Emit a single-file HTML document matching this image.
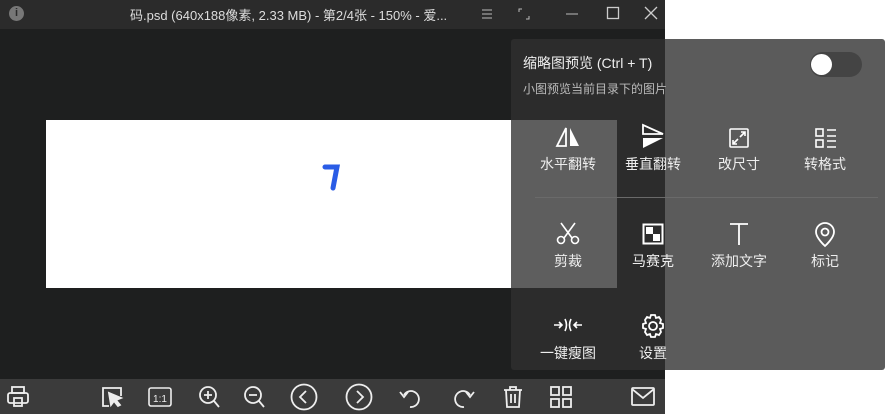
<!DOCTYPE html><html><head><meta charset="utf-8"><style>
*{margin:0;padding:0;box-sizing:border-box}
body{width:888px;height:417px;background:#fff;position:relative;overflow:hidden;font-family:"Liberation Sans","Noto Sans CJK SC",sans-serif;color:#fff}
.abs{position:absolute}
#win{left:0;top:0;width:665px;height:414px;background:#1e1f1f}
#title{left:0;top:0;width:665px;height:29px;background:#2b2b2b;font-size:13px;color:#ddd}
#tb{left:0;top:379px;width:665px;height:35px;background:#3b3b3b}
#img{left:46px;top:120px;width:571px;height:168px;background:#fff}
#pop{left:511px;top:39px;width:374px;height:331px;border-radius:3px;overflow:hidden}
.lbl{position:absolute;font-size:14px;width:100px;text-align:center;color:#eee}
svg{position:absolute}
</style></head><body>
<div id="win" class="abs"></div>
<div id="title" class="abs">
<div class="abs" style="left:9px;top:6px;width:15px;height:15px;border-radius:50%;background:#777;color:#2b2b2b;font-size:11px;font-weight:bold;text-align:center;line-height:15px">i</div>
<div class="abs" style="left:130px;top:5px;white-space:nowrap">码.psd (640x188像素, 2.33 MB) - 第2/4张 - 150% - 爱...</div>
<svg style="left:480px;top:7px" width="14" height="14"><path d="M2 3h10M2 7h10M2 11h10" stroke="#bbb" stroke-width="1"/></svg>
<svg style="left:517px;top:7px" width="14" height="14"><path d="M2 5V2h3M12 9v3H9" stroke="#bbb" fill="none"/></svg>
<svg style="left:565px;top:7px" width="14" height="14"><path d="M1 7h12" stroke="#bbb"/></svg>
<svg style="left:606px;top:6px" width="14" height="14"><rect x="1.5" y="1.5" width="11" height="11" stroke="#ccc" fill="none" stroke-width="1.3"/></svg>
<svg style="left:644px;top:6px" width="14" height="14"><path d="M1 1l12 12M13 1L1 13" stroke="#ccc" stroke-width="1.3"/></svg>
</div>
<div id="img" class="abs"><svg style="left:276px;top:42px" width="20" height="32"><path d="M3 5h12l-4 21" fill="none" stroke="#2a5ce6" stroke-width="5" stroke-linecap="round"/></svg></div>
<div id="tb" class="abs">
<svg style="left:5px;top:5px" width="26" height="26" fill="none" stroke="#eee" stroke-width="1.8"><rect x="7" y="3" width="12" height="6"/><rect x="3" y="9" width="20" height="10" rx="2"/><rect x="9" y="14" width="8" height="8"/></svg>
<svg style="left:99px;top:5px" width="26" height="26" fill="none" stroke="#eee" stroke-width="1.8"><path d="M10 22H4V4h18v8"/><path d="M10 9l12 5-5 2 4 5-2 1-4-5-3 4z" fill="#eee"/></svg>
<svg style="left:147px;top:5px" width="26" height="26" fill="none" stroke="#eee" stroke-width="1.6"><rect x="2" y="4" width="22" height="18" rx="2"/><text x="13" y="18" font-size="10" fill="#eee" stroke="none" text-anchor="middle" font-family="Liberation Sans">1:1</text></svg>
<svg style="left:197px;top:5px" width="26" height="26" fill="none" stroke="#eee" stroke-width="1.8"><circle cx="11" cy="11" r="8"/><path d="M17 17l5 6M7 11h8M11 7v8"/></svg>
<svg style="left:242px;top:5px" width="26" height="26" fill="none" stroke="#eee" stroke-width="1.8"><circle cx="11" cy="11" r="8"/><path d="M17 17l5 6M7 11h8"/></svg>
<svg style="left:290px;top:4px" width="28" height="28" fill="none" stroke="#eee" stroke-width="1.8"><circle cx="14" cy="14" r="12.5"/><path d="M16 8l-6 6 6 6"/></svg>
<svg style="left:345px;top:4px" width="28" height="28" fill="none" stroke="#eee" stroke-width="1.8"><circle cx="14" cy="14" r="12.5"/><path d="M12 8l6 6-6 6"/></svg>
<svg style="left:398px;top:5px" width="26" height="26" fill="none" stroke="#eee" stroke-width="1.8"><path d="M6 11a8 8 0 1 1 6 12"/><path d="M2 8l4 5 4-5"/></svg>
<svg style="left:450px;top:5px" width="26" height="26" fill="none" stroke="#eee" stroke-width="1.8"><path d="M20 11a8 8 0 1 0-6 12"/><path d="M24 8l-4 5-4-5"/></svg>
<svg style="left:500px;top:5px" width="26" height="26" fill="none" stroke="#eee" stroke-width="1.8"><path d="M4 6h18M10 6V3h6v3M6 6l1 17h12l1-17M11 10v9M15 10v9"/></svg>
<svg style="left:548px;top:5px" width="26" height="26" fill="none" stroke="#eee" stroke-width="1.8"><rect x="3" y="3" width="8" height="8"/><rect x="15" y="3" width="8" height="8"/><rect x="3" y="15" width="8" height="8"/><rect x="15" y="15" width="8" height="8"/></svg>
<svg style="left:630px;top:6px" width="26" height="24" fill="none" stroke="#eee" stroke-width="1.8"><rect x="2" y="3" width="22" height="17" rx="1"/><path d="M2 4l11 9 11-9"/></svg>
</div>
<div id="pop" class="abs">
<div class="abs" style="left:0;top:0;width:154px;height:331px;background:#2c2c2c"></div>
<div class="abs" style="left:154px;top:0;width:220px;height:331px;background:#5b5b5b"></div>
<div class="abs" style="left:0;top:81px;width:106px;height:168px;background:#5e5e5e"></div>
<div class="abs" style="left:12px;top:14px;font-size:14px;color:#eee">缩略图预览 (Ctrl + T)</div>
<div class="abs" style="left:12px;top:41px;font-size:12px;color:#bbb">小图预览当前目录下的图片</div>
<div class="abs" style="left:299px;top:13px;width:52px;height:25px;border-radius:13px;background:#444"><div class="abs" style="left:1px;top:2px;width:21px;height:21px;border-radius:50%;background:#fff"></div></div>
<div class="abs" style="left:24px;top:158px;width:343px;height:1px;background:#6a6a6a"></div>
<svg style="left:43px;top:86px" width="28" height="24"><path d="M12 3L3 21h9z" fill="none" stroke="#fff" stroke-width="1.8"/><path d="M16 3l9 18h-9z" fill="#fff"/></svg>
<div class="lbl" style="left:7px;top:115px">水平翻转</div>
<svg style="left:129px;top:84px" width="26" height="30"><path d="M3 2l20 9H3z" fill="none" stroke="#fff" stroke-width="1.8"/><path d="M3 15h20L3 25z" fill="#fff"/></svg>
<div class="lbl" style="left:92px;top:115px">垂直翻转</div>
<svg style="left:217px;top:88px" width="22" height="22" fill="none" stroke="#fff" stroke-width="1.6"><rect x="2" y="2" width="18" height="18" rx="1"/><path d="M12 10l5-5M13 5h4v4M10 12l-5 5M5 13v4h4"/></svg>
<div class="lbl" style="left:178px;top:115px">改尺寸</div>
<svg style="left:303px;top:88px" width="24" height="22" fill="none" stroke="#fff" stroke-width="1.6"><rect x="2" y="2" width="7" height="7"/><rect x="2" y="13" width="7" height="7"/><path d="M13 3h9M13 9h9M13 14h9M13 20h9"/></svg>
<div class="lbl" style="left:264px;top:115px">转格式</div>
<svg style="left:45px;top:182px" width="24" height="24" fill="none" stroke="#fff" stroke-width="1.6"><path d="M5 2l11 15M19 2L8 17"/><circle cx="5" cy="19" r="3.5"/><circle cx="19" cy="19" r="3.5"/></svg>
<div class="lbl" style="left:7px;top:212px">剪裁</div>
<svg style="left:131px;top:184px" width="22" height="22"><rect x="1.5" y="1.5" width="19" height="19" fill="none" stroke="#fff" stroke-width="2"/><rect x="4" y="4" width="7" height="7" fill="#fff"/><rect x="11" y="11" width="7" height="7" fill="#fff"/></svg>
<div class="lbl" style="left:92px;top:212px">马赛克</div>
<svg style="left:217px;top:183px" width="22" height="24"><path d="M2 2h18M11 2v21" stroke="#fff" stroke-width="1.8"/></svg>
<div class="lbl" style="left:178px;top:212px">添加文字</div>
<svg style="left:302px;top:183px" width="24" height="26" fill="none" stroke="#fff" stroke-width="1.8"><path d="M12 24s-9-8-9-14a9 9 0 0 1 18 0c0 6-9 14-9 14z"/><circle cx="12" cy="10" r="3.5"/></svg>
<div class="lbl" style="left:264px;top:212px">标记</div>
<svg style="left:41px;top:277px" width="32" height="18" fill="none" stroke="#fff" stroke-width="1.6"><path d="M2 9h8M7 6l3 3-3 3M13 3q3 6 0 12M19 3q-3 6 0 12M22 9h8M25 6l-3 3 3 3"/></svg>
<div class="lbl" style="left:7px;top:304px">一键瘦图</div>
<svg style="left:129px;top:274px" width="26" height="26" fill="none" stroke="#fff" stroke-width="1.8"><circle cx="13" cy="13" r="4"/><path d="M11 2h4l1 3 3-1 2 3-1 3 3 1v4l-3 1 1 3-2 3-3-1-1 3h-4l-1-3-3 1-2-3 1-3-3-1v-4l3-1-1-3 2-3 3 1z"/></svg>
<div class="lbl" style="left:92px;top:304px">设置</div>
</div>
</body></html>
